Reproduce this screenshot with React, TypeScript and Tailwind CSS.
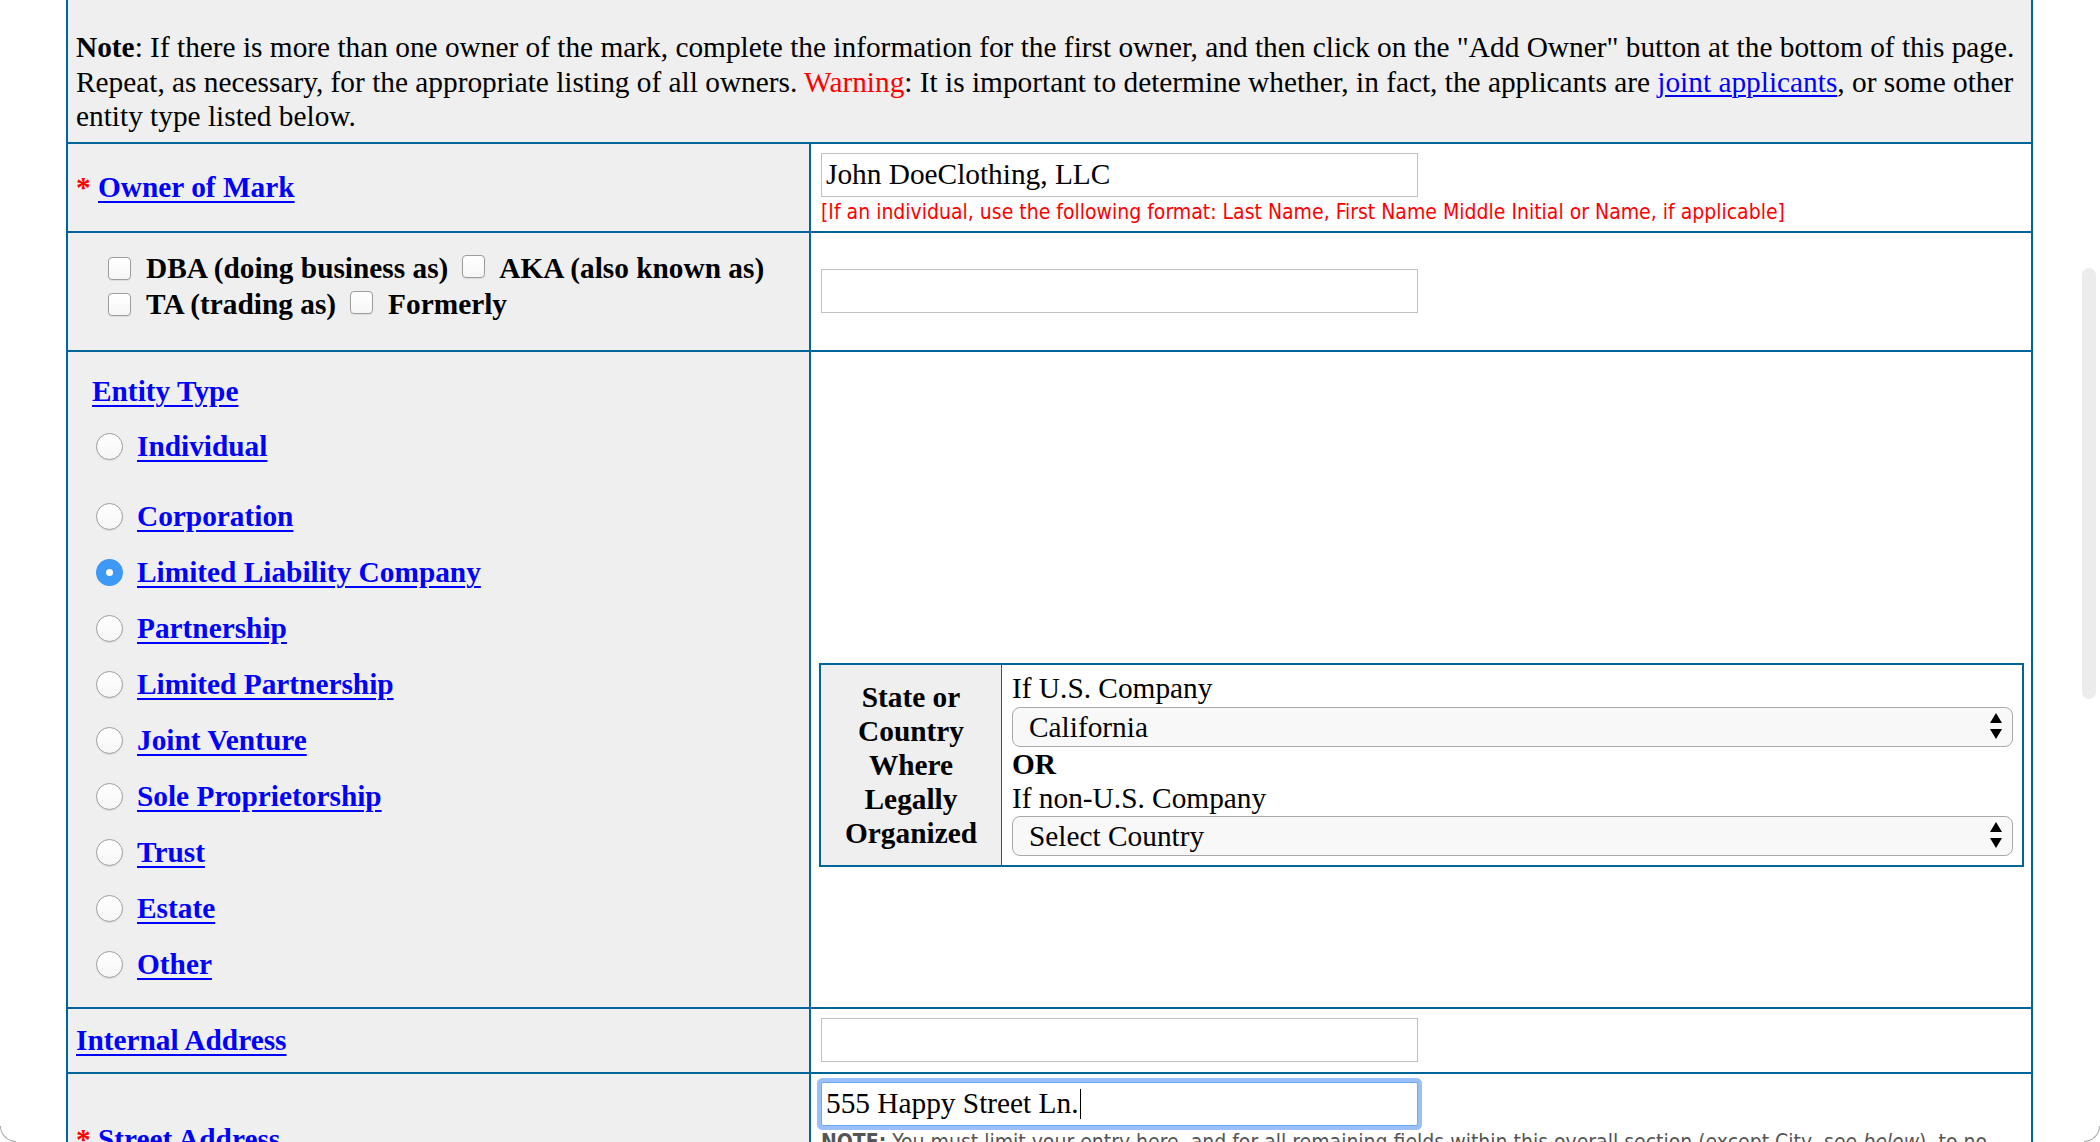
import React from "react";

const linkCls = "text-[#0000ff] underline decoration-[2px] underline-offset-[4px] font-bold";

function Checkbox() {
  return <span className="inline-block w-[23px] h-[23px] shrink-0 rounded-[4px] border border-[#9d9d9d] bg-gradient-to-b from-white to-[#f6f6f6] shadow-[0_1px_1px_rgba(0,0,0,0.08)]" />;
}

function Radio({ checked }: { checked?: boolean }) {
  if (checked) {
    return (
      <span className="flex w-[27px] h-[27px] shrink-0 items-center justify-center rounded-full bg-[#3d98f6]">
        <span className="w-[7px] h-[7px] rounded-full bg-white" />
      </span>
    );
  }
  return <span className="inline-block w-[27px] h-[27px] shrink-0 rounded-full border border-[#9d9d9d] bg-gradient-to-b from-white to-[#f6f6f6] shadow-[0_1px_1px_rgba(0,0,0,0.08)]" />;
}

function TextBox({ value, focused }: { value?: string; focused?: boolean }) {
  return (
    <div
      className={
        focused
          ? "flex h-[44px] w-[597px] items-center border border-[#6ea6ef] bg-white pl-[4px] shadow-[0_0_0_4px_rgba(122,170,245,0.75)] rounded-[2px]"
          : "flex h-[44px] w-[597px] items-center border border-[#c1c1c1] bg-white pl-[4px]"
      }
    >
      {value}
      {focused && <span className="ml-[1px] inline-block h-[30px] w-[1.5px] bg-black" />}
    </div>
  );
}

function Select({ value }: { value: string }) {
  return (
    <div className="flex h-[40px] items-center justify-between rounded-[8px] border border-[#a9a9a9] bg-[#f8f8f8] pl-[16px] pr-[10px]">
      <span>{value}</span>
      <svg width="12" height="27" viewBox="0 0 12 27">
        <polygon points="6,0 12,10 0,10" fill="#000" />
        <polygon points="0,16 12,16 6,26" fill="#000" />
      </svg>
    </div>
  );
}

const entityTypes = ["Corporation", "Limited Liability Company", "Partnership", "Limited Partnership", "Joint Venture", "Sole Proprietorship", "Trust", "Estate", "Other"];

export default function App() {
  return (
    <div className="relative h-screen w-full overflow-hidden bg-white font-['Liberation_Serif','Times_New_Roman',serif] text-[29.33px] leading-[34.5px] text-black">
      <div className="ml-[66px] w-[1967px] border-x-2 border-[#006699]">
        {/* note */}
        <div className="whitespace-nowrap border-b-2 border-[#006699] bg-[#efefef] pl-[8px] pt-[30px] pb-[8px]">
          <b>Note</b>: If there is more than one owner of the mark, complete the information for the first owner, and then click on the "Add Owner" button at the bottom of this page.
          <br />
          Repeat, as necessary, for the appropriate listing of all owners. <span className="text-[#ff0000]">Warning</span>: It is important to determine whether, in fact, the applicants are{" "}
          <a className="text-[#0000ff] underline decoration-[1.5px] underline-offset-[3px]">joint applicants</a>, or some other
          <br />
          entity type listed below.
        </div>

        {/* owner of mark */}
        <div className="flex h-[89px] border-b-2 border-[#006699]">
          <div className="flex w-[743px] items-center border-r-2 border-[#006699] bg-[#efefef] pl-[8px] font-bold">
            <span className="text-[#ff0000]">*</span>&nbsp;<a className={linkCls}>Owner of Mark</a>
          </div>
          <div className="flex-1 bg-white pl-[10px] pt-[9px]">
            <TextBox value="John DoeClothing, LLC" />
            <div className="mt-[3px] font-['DejaVu_Sans_Condensed','Liberation_Sans',sans-serif] text-[21px] leading-[24px] text-[#ff0000]">
              [If an individual, use the following format: Last Name, First Name Middle Initial or Name, if applicable]
            </div>
          </div>
        </div>

        {/* dba */}
        <div className="flex h-[119px] border-b-2 border-[#006699]">
          <div className="flex w-[743px] flex-col border-r-2 border-[#006699] bg-[#efefef] pl-[40px] pt-[18px] font-bold">
            <div className="flex h-[36px] items-center">
              <Checkbox />
              <span className="ml-[15px]">DBA (doing business as)</span>
              <span className="ml-[14px]"><Checkbox /></span>
              <span className="ml-[14px]">AKA (also known as)</span>
            </div>
            <div className="flex h-[36px] items-center">
              <Checkbox />
              <span className="ml-[15px]">TA (trading as)</span>
              <span className="ml-[14px]"><Checkbox /></span>
              <span className="ml-[15px]">Formerly</span>
            </div>
          </div>
          <div className="flex-1 bg-white pl-[10px] pt-[36px]">
            <TextBox />
          </div>
        </div>

        {/* entity type */}
        <div className="flex h-[657px] border-b-2 border-[#006699]">
          <div className="flex w-[743px] flex-col border-r-2 border-[#006699] bg-[#efefef] pl-[24px] pt-[13px]">
            <div className="flex h-[54px] items-center">
              <a className={linkCls}>Entity Type</a>
            </div>
            <div className="ml-[4px] flex h-[56px] items-center">
              <Radio />
              <a className={`ml-[14px] ${linkCls}`}>Individual</a>
            </div>
            <div className="h-[14px]" />
            {entityTypes.map((t) => (
              <div key={t} className="ml-[4px] flex h-[56px] items-center">
                <Radio checked={t === "Limited Liability Company"} />
                <a className={`ml-[14px] ${linkCls}`}>{t}</a>
              </div>
            ))}
          </div>
          <div className="flex-1 bg-white pl-[8px] pr-[7px] pt-[311px]">
            <div className="flex border-2 border-[#006699] leading-[34px]">
              <div className="flex w-[181px] items-center justify-center border-r border-[#006699] bg-[#efefef] text-center font-bold">
                State or
                <br />
                Country
                <br />
                Where
                <br />
                Legally
                <br />
                Organized
              </div>
              <div className="flex-1 pl-[10px] pr-[9px] pt-[6px] pb-[9px]">
                <div>If U.S. Company</div>
                <div className="mt-[2px]">
                  <Select value="California" />
                </div>
                <div className="font-bold">OR</div>
                <div>If non-U.S. Company</div>
                <div className="mt-[1px]">
                  <Select value="Select Country" />
                </div>
              </div>
            </div>
          </div>
        </div>

        {/* internal address */}
        <div className="flex h-[65px] border-b-2 border-[#006699]">
          <div className="flex w-[743px] items-center border-r-2 border-[#006699] bg-[#efefef] pl-[8px]">
            <a className={linkCls}>Internal Address</a>
          </div>
          <div className="flex flex-1 items-center bg-white pl-[10px]">
            <TextBox />
          </div>
        </div>

        {/* street address */}
        <div className="flex h-[134px] border-b-2 border-[#006699]">
          <div className="flex w-[743px] items-center border-r-2 border-[#006699] bg-[#efefef] pl-[8px] font-bold">
            <span className="text-[#ff0000]">*</span>&nbsp;<a className={linkCls}>Street Address</a>
          </div>
          <div className="flex-1 bg-white pl-[10px] pt-[8px]">
            <TextBox value="555 Happy Street Ln." focused />
            <div className="mt-[4px] whitespace-nowrap font-['DejaVu_Sans_Condensed','Liberation_Sans',sans-serif] text-[21px] leading-[24px] text-[#555555]">
              <b>NOTE:</b> You must limit your entry here, and for all remaining fields within this overall section (except City, see <i>below</i>), to no
            </div>
          </div>
        </div>
      </div>

      {/* scrollbar thumb */}
      <div className="absolute right-[4px] top-[268px] h-[431px] w-[14px] rounded-full bg-[#ececec]" />
      {/* window corners */}
      <div className="absolute bottom-0 left-0 h-[16px] w-[16px] rounded-bl-[16px] border-b border-l border-[#a8a8a8]" />
      <div className="absolute bottom-0 right-0 h-[16px] w-[16px] rounded-br-[16px] border-b border-r border-[#a8a8a8]" />
    </div>
  );
}
